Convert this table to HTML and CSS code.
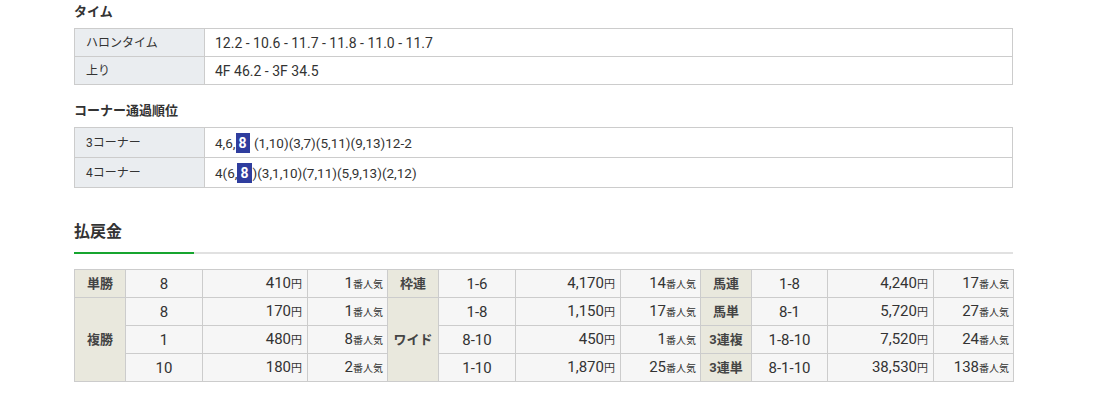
FILE: index.html
```html
<!DOCTYPE html>
<html lang="ja">
<head>
<meta charset="utf-8">
<link rel="stylesheet" href="styles.css">
</head>
<body>
<div class="wrap">
  <h3 class="sub">タイム</h3>
  <table class="info">
    <tr><th>ハロンタイム</th><td>12.2 - 10.6 - 11.7 - 11.8 - 11.0 - 11.7</td></tr>
    <tr><th>上り</th><td>4F 46.2 - 3F 34.5</td></tr>
  </table>

  <h3 class="sub sub2">コーナー通過順位</h3>
  <table class="info corner">
    <tr><th>3コーナー</th><td>4,6,<span class="hl">8</span> (1,10)(3,7)(5,11)(9,13)12-2</td></tr>
    <tr><th>4コーナー</th><td>4(6,<span class="hl">8</span>)(3,1,10)(7,11)(5,9,13)(2,12)</td></tr>
  </table>

  <h2 class="title"><span>払戻金</span></h2>

  <table class="pay">
    <colgroup>
      <col class="c1"><col class="c2"><col class="c3"><col class="c4">
      <col class="c1"><col class="c2"><col class="c3"><col class="c4">
      <col class="c1"><col class="c2b"><col class="c3b"><col class="c4">
    </colgroup>
    <tr>
      <th>単勝</th><td class="n">8</td><td class="y">410<small>円</small></td><td class="p">1<small>番人気</small></td>
      <th>枠連</th><td class="n">1-6</td><td class="y">4,170<small>円</small></td><td class="p">14<small>番人気</small></td>
      <th>馬連</th><td class="n">1-8</td><td class="y">4,240<small>円</small></td><td class="p">17<small>番人気</small></td>
    </tr>
    <tr>
      <th rowspan="3">複勝</th><td class="n dash">8</td><td class="y dash">170<small>円</small></td><td class="p dash">1<small>番人気</small></td>
      <th rowspan="3">ワイド</th><td class="n dash">1-8</td><td class="y dash">1,150<small>円</small></td><td class="p dash">17<small>番人気</small></td>
      <th>馬単</th><td class="n">8-1</td><td class="y">5,720<small>円</small></td><td class="p">27<small>番人気</small></td>
    </tr>
    <tr>
      <td class="n dash">1</td><td class="y dash">480<small>円</small></td><td class="p dash">8<small>番人気</small></td>
      <td class="n dash">8-10</td><td class="y dash">450<small>円</small></td><td class="p dash">1<small>番人気</small></td>
      <th>3連複</th><td class="n">1-8-10</td><td class="y">7,520<small>円</small></td><td class="p">24<small>番人気</small></td>
    </tr>
    <tr>
      <td class="n">10</td><td class="y">180<small>円</small></td><td class="p">2<small>番人気</small></td>
      <td class="n">1-10</td><td class="y">1,870<small>円</small></td><td class="p">25<small>番人気</small></td>
      <th>3連単</th><td class="n">8-1-10</td><td class="y">38,530<small>円</small></td><td class="p">138<small>番人気</small></td>
    </tr>
  </table>
</div>
</body>
</html>
```

FILE: styles.css
```css
html, body {
  margin: 0;
  padding: 0;
  background: #fff;
}
body {
  font-family: Roboto, "Noto Sans CJK JP", sans-serif;
  color: #333;
  font-size: 13px;
}
.wrap {
  width: 939px;
  margin-left: 74px;
  padding-top: 3px;
}
.sub {
  margin: 0 0 7px;
  font-size: 13px;
  line-height: 18px;
  font-weight: bold;
  color: #333;
}
.sub2 {
  margin-top: 17px;
}
.info {
  width: 100%;
  border-collapse: collapse;
  table-layout: fixed;
}
.info th, .info td {
  border: 1px solid #ccc;
  height: 27px;
  padding: 0 10px;
  font-weight: normal;
  text-align: left;
  line-height: 18px;
}
.info th {
  width: 108px;
  background: #eaedf0;
  padding-left: 11px;
  font-size: 12px;
}
.info td {
  font-size: 14px;
}
.corner th, .corner td {
  height: 29px;
}
.corner td {
  font-size: 13.5px;
}
.hl {
  display: inline-block;
  background: #2f3d9e;
  color: #fff;
  font-weight: bold;
  font-size: 14px;
  padding: 0 3px;
  line-height: 20px;
  margin-right: 1px;
}
.title {
  margin: 33px 0 15px;
  font-size: 16px;
  line-height: 22px;
  font-weight: bold;
  color: #333;
  border-bottom: 2px solid #e1e1e1;
  padding-bottom: 9px;
  position: relative;
}
.title::after {
  content: "";
  position: absolute;
  left: 0;
  bottom: -2px;
  width: 120px;
  height: 2px;
  background: #16a52f;
}
.pay {
  width: 939px;
  border-collapse: collapse;
  table-layout: fixed;
}
.pay col.c1 { width: 51px; }
.pay col.c2 { width: 77px; }
.pay col.c3 { width: 105px; }
.pay col.c4 { width: 80px; }
.pay col.c2b { width: 76px; }
.pay col.c3b { width: 106px; }
.pay th, .pay td {
  border: 1px solid #ccc;
  height: 27px;
  padding: 0;
  line-height: 18px;
}
.pay th {
  background: #e9e8dd;
  font-weight: bold;
  font-size: 13px;
  text-align: center;
  color: #444;
}
.pay td {
  background: #f6f6f6;
  font-size: 15px;
}
.pay td.n {
  text-align: center;
}
.pay td.y {
  text-align: right;
  padding-right: 5px;
}
.pay td.p {
  text-align: right;
  padding-right: 4px;
}
.pay td.dash {
  border-bottom: 1px dashed #ccc;
}
.pay small {
  font-size: 10px;
}
.pay td.y small {
  font-size: 11px;
}
```
